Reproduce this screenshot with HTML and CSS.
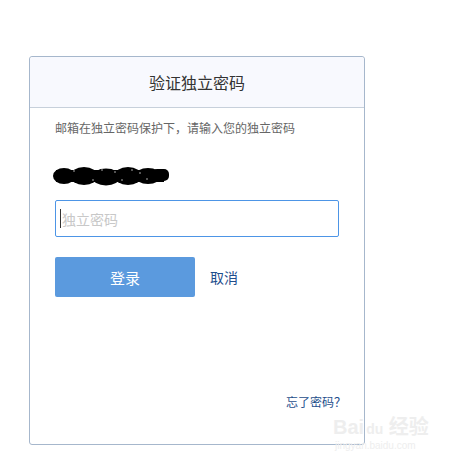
FILE: index.html
```html
<!DOCTYPE html>
<html lang="zh">
<head>
<meta charset="utf-8">
<link rel="stylesheet" href="styles.css">
</head>
<body>
<div class="card">
  <div class="card-head">验证独立密码</div>
  <div class="card-body">
    <p class="desc">邮箱在独立密码保护下，请输入您的独立密码</p>
    <div class="account">
      <svg width="120" height="22" viewBox="0 0 120 22">
        <g fill="#000">
          <ellipse cx="12" cy="11" rx="11" ry="8"/>
          <ellipse cx="32" cy="11" rx="14" ry="9"/>
          <ellipse cx="54" cy="12" rx="14" ry="8.5"/>
          <ellipse cx="76" cy="11" rx="14" ry="9"/>
          <ellipse cx="96" cy="11" rx="13" ry="8"/>
          <rect x="100" y="4" width="17" height="12" rx="5"/>
          <rect x="4" y="5" width="108" height="12"/>
        </g>
        <g fill="#fff" opacity="0.9">
          <circle cx="22" cy="6" r="0.7"/><circle cx="41" cy="15" r="0.7"/>
          <circle cx="63" cy="7" r="0.7"/><circle cx="70" cy="15" r="0.7"/>
          <circle cx="88" cy="8" r="0.7"/><circle cx="95" cy="14" r="0.7"/>
          <circle cx="50" cy="5" r="0.7"/><circle cx="80" cy="5" r="0.7"/>
        </g>
      </svg>
    </div>
    <div class="field">
      <span class="caret"></span>
      <input class="pwd" type="password" placeholder="独立密码">
    </div>
    <div class="actions">
      <button class="btn-login">登录</button>
      <a class="cancel">取消</a>
    </div>
  </div>
  <div class="card-foot"><a class="forgot">忘了密码？</a></div>
</div>
<div class="watermark">
  <div class="wm-top">Bai<span class="wm-du">du</span> 经验</div>
  <div class="wm-url">jingyan.baidu.com</div>
</div>
</body>
</html>
```
FILE: styles.css
```css
html, body {
  margin: 0;
  padding: 0;
  background: #fff;
  font-family: "Noto Sans CJK SC", "Liberation Sans", sans-serif;
}
body {
  position: relative;
  width: 452px;
  height: 461px;
  overflow: hidden;
}
.card {
  box-sizing: border-box;
  margin: 56px 0 0 29px;
  width: 336px;
  height: 389px;
  border: 1px solid #a6b7cc;
  border-radius: 3px;
  display: flex;
  flex-direction: column;
  background: #fff;
}
.card-head {
  height: 50px;
  background: #f8f9fe;
  border-bottom: 1px solid #c7d0db;
  border-radius: 3px 3px 0 0;
  text-align: center;
  line-height: 50px;
  font-size: 16px;
  color: #333;
}
.card-body {
  padding: 11px 0 0 25px;
}
.desc {
  margin: 0;
  font-size: 12px;
  line-height: 18px;
  color: #666;
}
.account {
  margin-top: 28px;
  height: 22px;
  margin-left: -3px;
}
.account svg { display: block; }
.field {
  position: relative;
  margin-top: 13px;
  width: 284px;
}
.pwd {
  box-sizing: border-box;
  width: 284px;
  height: 37px;
  border: 1px solid #4d95e6;
  border-radius: 2px;
  padding: 0 0 0 6px;
  font-family: inherit;
  font-size: 14px;
  outline: none;
}
.pwd::placeholder { color: #c8c8c8; }
.caret {
  position: absolute;
  left: 5px;
  top: 9px;
  width: 1px;
  height: 19px;
  background: #333;
}
.actions {
  margin-top: 20px;
  display: flex;
  align-items: center;
  gap: 15px;
}
.btn-login {
  width: 140px;
  height: 40px;
  border: 0;
  border-radius: 2px;
  background: #5b9ade;
  color: #fff;
  font-family: inherit;
  font-size: 15px;
  padding: 0;
}
.cancel {
  font-size: 14px;
  color: #1e4e8c;
}
.card-foot {
  margin-top: auto;
  padding: 0 18px 32px 0;
  text-align: right;
}
.forgot {
  font-size: 12px;
  color: #1e4e8c;
  line-height: 14px;
}
.watermark {
  position: absolute;
  left: 333px;
  top: 416px;
  color: #eeeeee;
  font-family: "Liberation Sans", "Noto Sans CJK SC", sans-serif;
}
.wm-top {
  font-size: 20px;
  font-weight: bold;
  line-height: 22px;
}
.wm-du {
  font-size: 14px;
  margin-left: 2px;
}
.wm-url {
  font-size: 10px;
  line-height: 12px;
  margin-left: 2px;
}
```
